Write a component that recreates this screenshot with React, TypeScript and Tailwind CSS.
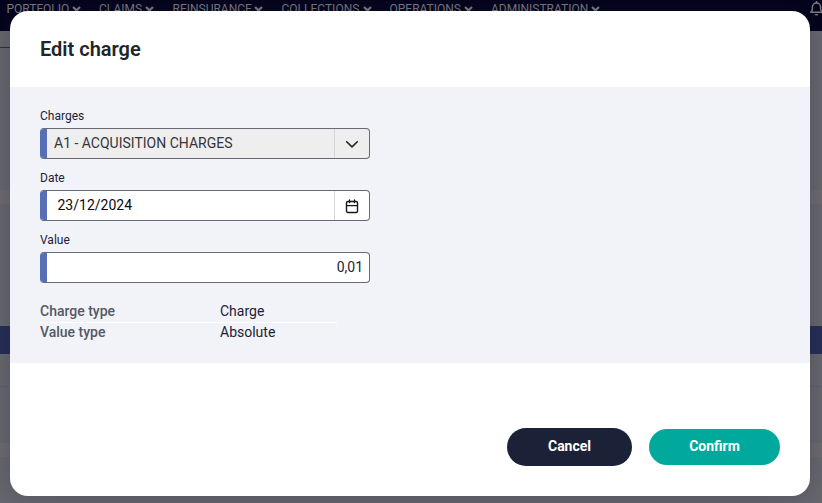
const menu = [
  { label: "PORTFOLIO", box: "w-[92.5px]", text: "w-[63px]" },
  { label: "CLAIMS", box: "w-[73.5px]", text: "w-[43.5px]" },
  { label: "REINSURANCE", box: "w-[109px]", text: "w-[79.5px]" },
  { label: "COLLECTIONS", box: "w-[108px]", text: "w-[79px]" },
  { label: "OPERATIONS", box: "w-[101.5px]", text: "w-[72px]" },
  { label: "ADMINISTRATION", box: "w-[120px]", text: "w-[97.5px]" },
];

function Caret() {
  return (
    <svg className="ml-[2px] -mt-px h-[6px] w-[9px] shrink-0" viewBox="0 0 9 6" fill="none" stroke="currentColor" strokeWidth="2.3">
      <path d="M1 1 4.5 4.3 8 1" />
    </svg>
  );
}

function BellIcon() {
  return (
    <svg className="-mr-[2px] ml-auto shrink-0" width="15" height="15" viewBox="0 0 15 15" fill="none" stroke="currentColor" strokeWidth="1.5">
      <path d="M1.8 11.2h11.4c-1.2-1-1.6-2-1.6-3.6V6.2a4.1 4.1 0 0 0-8.2 0v1.4c0 1.6-.4 2.6-1.6 3.6Z" strokeLinejoin="round" />
      <path d="M7.5 0v2" />
      <path d="M5.8 12.9a1.7 1.5 0 0 0 3.4 0Z" fill="currentColor" stroke="none" />
    </svg>
  );
}

function Backdrop() {
  return (
    <div className="flex h-full flex-col bg-[#67676d]">
      <nav className="flex h-[31px] shrink-0 items-start bg-[#03031c] pl-[6.5px] pt-px text-[12px] leading-[16px] text-[#7c7c80]">
        {menu.map((m) => (
          <div key={m.label} className={`flex shrink-0 items-center ${m.box}`}>
            <span className={`whitespace-nowrap ${m.text}`}>{m.label}</span>
            <Caret />
          </div>
        ))}
        <BellIcon />
      </nav>
      <div className="flex h-[17px] w-[400px] shrink-0 border-b border-[#303038]" />
      <div className="h-[142px] shrink-0" />
      <div className="h-[14px] shrink-0 bg-[#6d6b6f]" />
      <div className="h-[122px] shrink-0" />
      <div className="h-[28px] shrink-0 bg-[#262e55]" />
      <div className="h-[33px] shrink-0 border-b border-[#5c5c7c]" />
      <div className="h-[56px] shrink-0" />
      <div className="h-[14px] shrink-0 bg-[#6d6b6f]" />
    </div>
  );
}

const field = "flex h-[31px] w-[330px] overflow-hidden rounded-[4px] border border-l-0 border-[#686977]";

function Label({ children }: { children: string }) {
  return <div className="h-[17px] text-[12px] leading-[16px] text-[#1b2237]">{children}</div>;
}

function Accent() {
  return <span className="-my-px w-[7px] shrink-0 bg-[#586eb5]" />;
}

export default function App() {
  return (
    <div className="relative h-[503px] w-[822px] overflow-hidden font-['Roboto',sans-serif]">
      <Backdrop />
      <section className="absolute left-[10px] top-[11px] flex h-[485px] w-[800px] flex-col overflow-hidden rounded-[18px] bg-white shadow-[0_0_26px_rgba(30,30,55,0.3)]">
        <header className="flex h-[76px] shrink-0 items-center px-[30px]">
          <h1 className="text-[20px] font-semibold leading-[24px] text-[#212529]">Edit charge</h1>
        </header>
        <div className="h-[276px] shrink-0 bg-[#f2f3f9] px-[30px] pt-[21px] text-[14px]">
          <div className="h-[62px]">
            <Label>Charges</Label>
            <div className="pt-[3px]">
              <div className={`${field} bg-[#eeeeee]`}>
                <Accent />
                <span className="flex-1 pl-[7px] leading-[29px] text-[#34353b]">A1 - ACQUISITION CHARGES</span>
                <span className="flex w-[35px] items-center justify-center border-l border-[#d5d5da]">
                  <svg width="14" height="14" viewBox="0 0 14 14" fill="none" stroke="#212529" strokeWidth="1.6" strokeLinecap="round" strokeLinejoin="round">
                    <path d="M1.7 4.7 7 9.9 12.3 4.7" />
                  </svg>
                </span>
              </div>
            </div>
          </div>
          <div className="h-[62px]">
            <Label>Date</Label>
            <div className="pt-[3px]">
              <div className={`${field} bg-white`}>
                <Accent />
                <span className="flex-1 pl-[10.5px] leading-[29px] text-[#0b0b0d]">23/12/2024</span>
                <span className="flex w-[35px] items-center justify-center border-l border-[#d5d5da]">
                  <svg className="mt-[2px]" width="14" height="15" viewBox="0 0 14 15" fill="none" stroke="#16171b" strokeWidth="1.4" strokeLinecap="round" strokeLinejoin="round">
                    <rect x="1.5" y="2.5" width="11" height="11" rx="1.3" />
                    <path d="M1.5 6.6h11M4.5 1v2.6M9.5 1v2.6" />
                  </svg>
                </span>
              </div>
            </div>
          </div>
          <div className="h-[62px]">
            <Label>Value</Label>
            <div className="pt-[3px]">
              <div className={`${field} bg-white`}>
                <Accent />
                <span className="flex-1 pr-[6px] text-right leading-[29px] text-[#212433]">0,01</span>
              </div>
            </div>
          </div>
          <dl className="mt-[7px] w-[297px] text-[#1b2237]">
            <div className="flex h-[22px] border-b border-white leading-[20px]">
              <dt className="w-[180px] font-medium text-[#555863]">Charge type</dt>
              <dd>Charge</dd>
            </div>
            <div className="flex leading-[18px]">
              <dt className="w-[180px] font-medium text-[#555863]">Value type</dt>
              <dd>Absolute</dd>
            </div>
          </dl>
        </div>
        <footer className="mt-[65px] flex h-[38px] items-center justify-end gap-[17px] pr-[30px] text-[14px] font-bold text-white">
          <button className="h-[38px] w-[125px] rounded-full bg-[#1b2237] pb-[2px]">Cancel</button>
          <button className="h-[36px] w-[131px] rounded-full bg-[#00a99b] pb-px">Confirm</button>
        </footer>
      </section>
    </div>
  );
}
